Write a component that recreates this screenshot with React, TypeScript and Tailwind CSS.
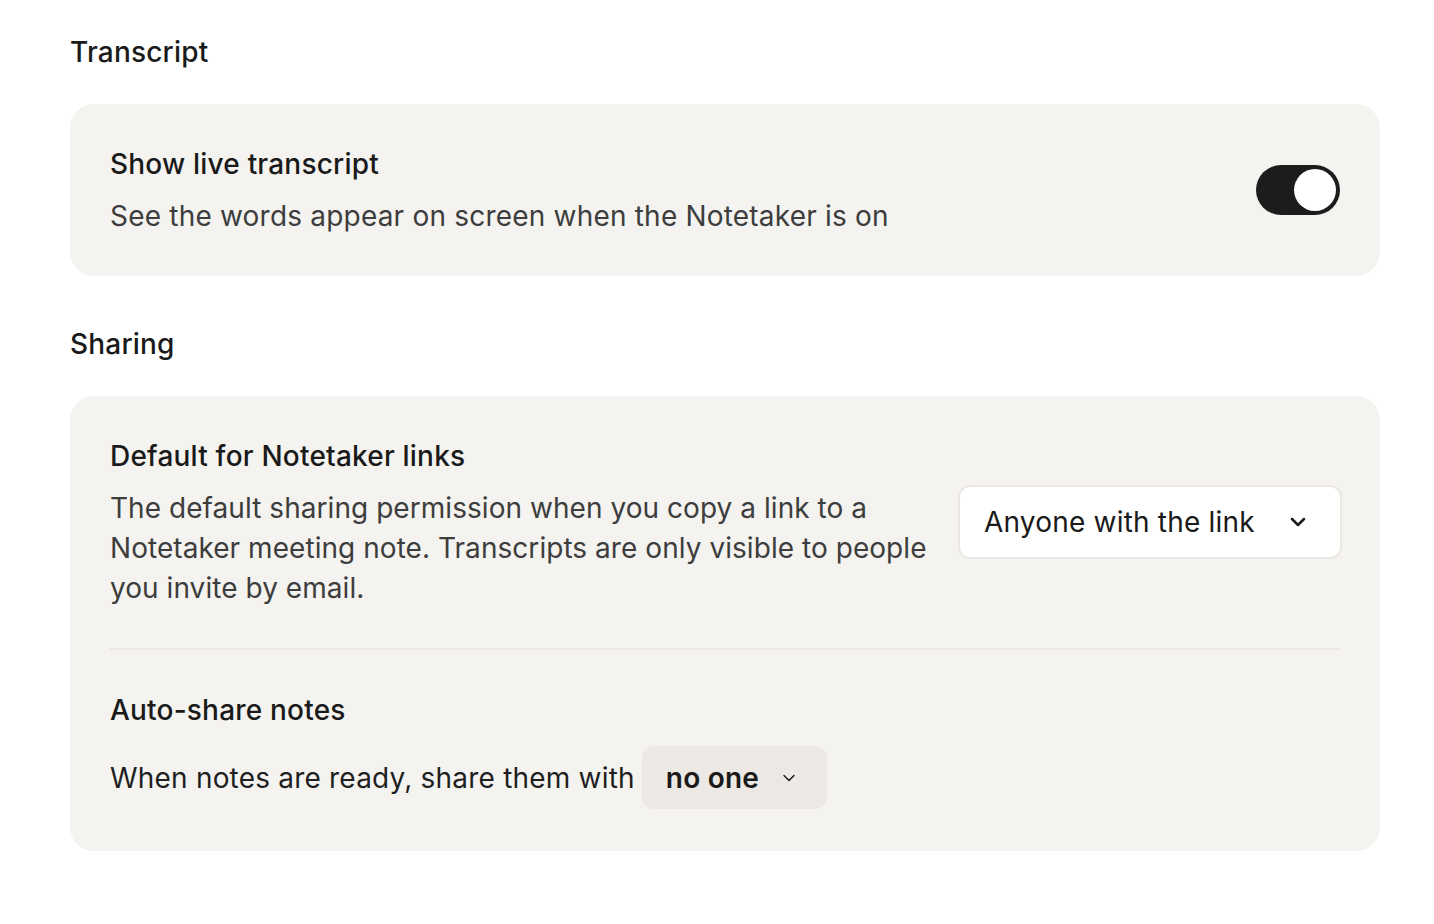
import { ChevronDown } from "lucide-react";

const Toggle = ({ on }: { on: boolean }) => (
  <button
    className={`relative flex h-[50px] w-[84px] shrink-0 items-center rounded-full px-[4px] ${on ? "justify-end bg-[#1c1c1c]" : "justify-start bg-[#d9d6d0]"}`}
  >
    <div className="h-[42px] w-[42px] rounded-full bg-white" />
  </button>
);

export default function App() {
  return (
    <div className="min-h-screen bg-white pl-[70px] pr-[54px] pt-[32px] font-['Inter',sans-serif] text-[#1a1a1a]">
      {/* Transcript */}
      <h2 className="text-[28px] font-medium leading-[40px] tracking-[0.2px]">Transcript</h2>
      <div className="mt-[32px] flex items-center justify-between rounded-[24px] bg-[#f4f3f0] px-[40px] py-[40px]">
        <div>
          <div className="text-[28px] font-medium leading-[40px] tracking-[0.2px]">Show live transcript</div>
          <div className="mt-[12px] text-[28px] leading-[40px] tracking-[0.2px] text-[#3d3d3d]">
            See the words appear on screen when the Notetaker is on
          </div>
        </div>
        <Toggle on />
      </div>

      {/* Sharing */}
      <h2 className="mt-[48px] text-[28px] font-medium leading-[40px] tracking-[0.2px]">Sharing</h2>
      <div className="mt-[32px] rounded-[24px] bg-[#f4f3f0] px-[40px] pb-[42px] pt-[40px]">
        <div className="flex items-center gap-[22px]">
          <div className="flex-1">
            <div className="text-[28px] font-medium leading-[40px] tracking-[0.2px]">Default for Notetaker links</div>
            <p className="mt-[12px] text-[28px] leading-[40px] tracking-[0.05px] text-[#3d3d3d]">
              The default sharing permission when you copy a link to a Notetaker meeting note. Transcripts are only visible to people you invite by email.
            </p>
          </div>
          <button className="-mr-[2px] flex h-[74px] w-[384px] shrink-0 items-center justify-between rounded-[12px] border-2 border-[#ebe8e3] bg-white pl-[24px] pr-[30px] text-[28px] tracking-[0.2px] text-[#1a1a1a]">
            <span>Anyone with the link</span>
            <ChevronDown size={24} strokeWidth={2.5} />
          </button>
        </div>

        <div className="my-[40px] h-[2px] bg-[#ebe8e3]" />

        <div className="text-[28px] font-medium leading-[40px] tracking-[0.2px]">Auto-share notes</div>
        <div className="mt-[16px] flex items-center gap-[7px] text-[28px] tracking-[0.2px] text-[#1f1f1f]">
          <span>When notes are ready, share them with</span>
          <button className="flex h-[63px] items-center gap-[20px] rounded-[12px] bg-[#ece8e3] pl-[24px] pr-[28px] font-semibold text-[#1a1a1a]">
            <span>no one</span>
            <ChevronDown size={20} strokeWidth={1.75} />
          </button>
        </div>
      </div>
    </div>
  );
}
